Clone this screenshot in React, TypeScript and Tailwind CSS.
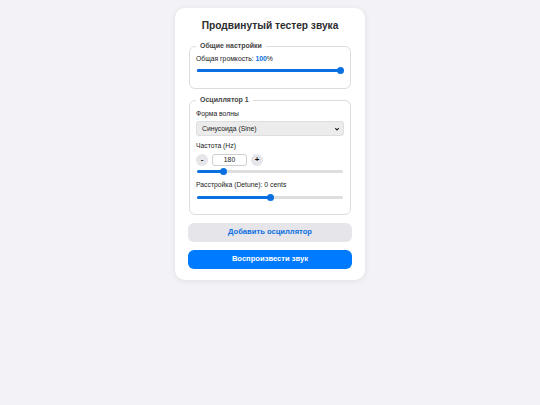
import React from 'react';

function Slider({ pct, full }: { pct: number; full?: boolean }) {
  return (
    <div className="relative h-[7px] mx-px flex items-center">
      <div className={`h-[3px] w-full rounded-full ${full ? 'bg-[#0a6fe0]' : 'bg-[#dedede]'}`}>
        <div className="h-full rounded-full bg-[#0a6fe0]" style={{ width: `${pct}%` }} />
      </div>
      <div
        className="absolute top-0 w-[7px] h-[7px] rounded-full bg-[#0a6fe0] -ml-[3.5px]"
        style={{ left: `${pct}%` }}
      />
    </div>
  );
}

function Group({ title, children, className = '' }: { title: string; children: React.ReactNode; className?: string }) {
  return (
    <fieldset className={`border border-[#dcdcdc] rounded-[6px] px-[6px] mx-px ${className}`}>
      <legend className="px-[4px] text-[7px] leading-[10px] font-bold text-[#444]">{title}</legend>
      {children}
    </fieldset>
  );
}

export default function App() {
  return (
    <div className="min-h-[405px] bg-[#f2f2f7] pt-[8px] font-['Liberation_Sans',Arial,sans-serif] text-[#222]">
      <div className="mx-auto w-[190px] bg-white rounded-[10px] shadow-[0_1px_6px_rgba(0,0,0,0.08)] px-[13px] pt-[10px] pb-[11px]">
        <h1 className="text-center text-[10.2px] leading-[15px] font-bold text-[#2c2c2e]">Продвинутый тестер звука</h1>

        <Group title="Общие настройки" className="mt-[8px] pb-[14px]">
          <div className="mt-[3px] text-[6.8px] leading-[10px]">
            Общая громкость: <span className="font-bold text-[#0a6fe0]">100</span>%
          </div>
          <div className="mt-[3px]">
            <Slider pct={98} full />
          </div>
        </Group>

        <Group title="Осциллятор 1" className="mt-[6px] pb-[13px]">
          <div className="mt-[4px] text-[6.8px] leading-[10px]">Форма волны</div>
          <div className="mt-[2px] h-[15px] rounded-[3px] bg-[#ececec] border border-[#dedede] flex items-center justify-between pl-[5px] pr-[3px]">
            <span className="text-[6.8px] leading-[10px]">Синусоида (Sine)</span>
            <svg width="6" height="6" viewBox="0 0 10 10">
              <path d="M2 3.5 L5 6.5 L8 3.5" fill="none" stroke="#222" strokeWidth="1.8" />
            </svg>
          </div>
          <div className="mt-[5px] text-[6.8px] leading-[10px]">Частота (Hz)</div>
          <div className="mt-[3px] flex items-center gap-[4px] h-[12px]">
            <div className="w-[12px] h-[12px] rounded-full bg-[#e5e5ea] flex items-center justify-center text-[8px] leading-none font-bold text-[#111]">-</div>
            <div className="w-[35px] h-[12px] border border-[#cfcfcf] rounded-[3px] flex items-center justify-center text-[6.8px] leading-none">180</div>
            <div className="w-[12px] h-[12px] rounded-full bg-[#e5e5ea] flex items-center justify-center text-[8px] leading-none font-bold text-[#111]">+</div>
          </div>
          <div className="mt-[1.5px]">
            <Slider pct={18} />
          </div>
          <div className="mt-[5.5px] text-[6.8px] leading-[10px]">Расстройка (Detune): 0 cents</div>
          <div className="mt-[3.5px]">
            <Slider pct={50} />
          </div>
        </Group>

        <button className="mt-[8px] w-full h-[19px] rounded-[6px] bg-[#e5e5ea] text-[#0a6fe0] text-[7.6px] font-bold">
          Добавить осциллятор
        </button>
        <button className="mt-[8px] w-full h-[19px] rounded-[6px] bg-[#007aff] text-white text-[7.6px] font-bold">
          Воспроизвести звук
        </button>
      </div>
    </div>
  );
}
